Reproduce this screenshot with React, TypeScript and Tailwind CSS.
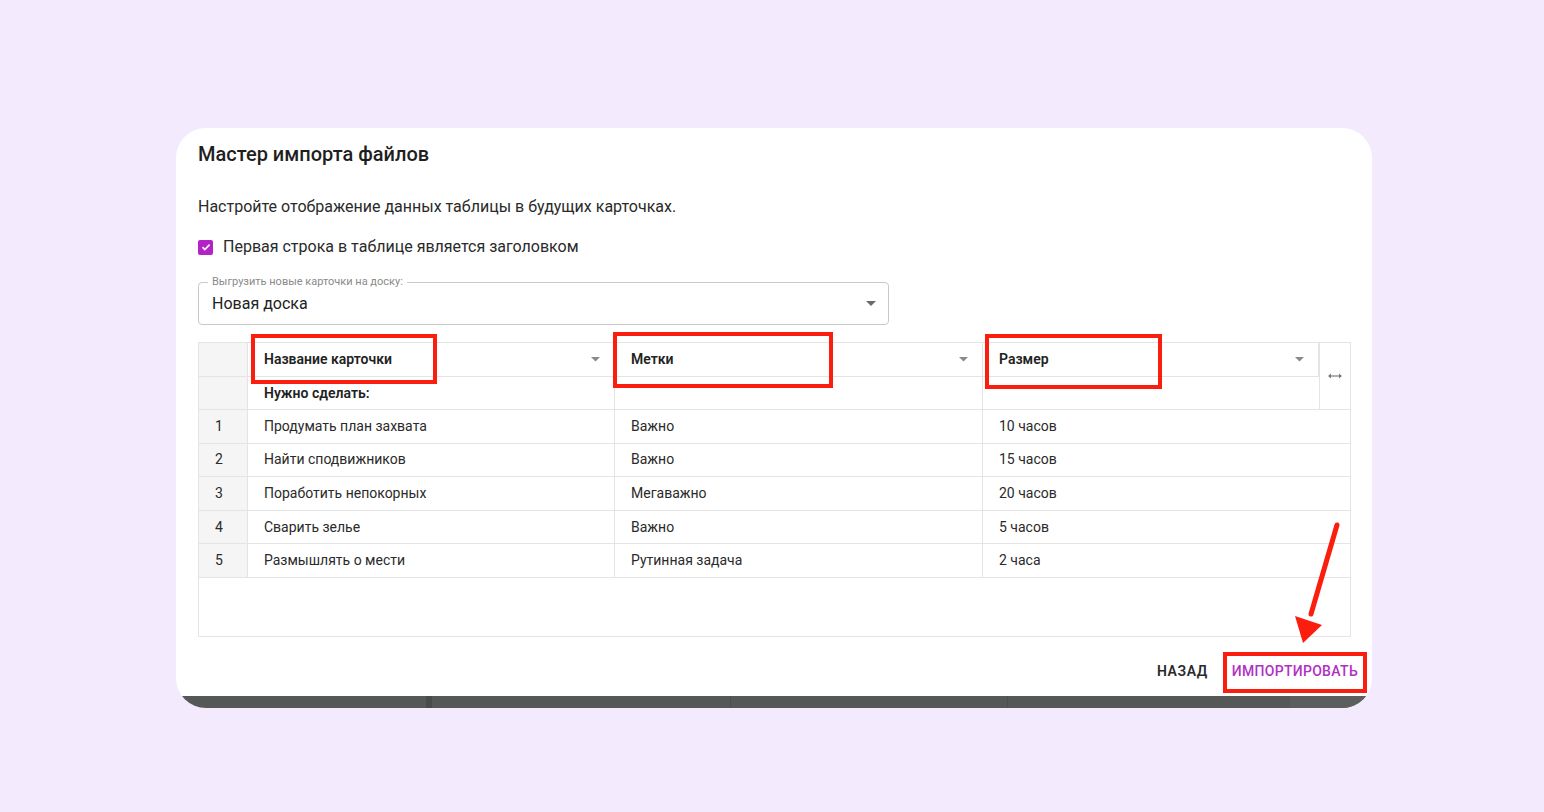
import React from "react";

const rows = [
  ["1", "Продумать план захвата", "Важно", "10 часов"],
  ["2", "Найти сподвижников", "Важно", "15 часов"],
  ["3", "Поработить непокорных", "Мегаважно", "20 часов"],
  ["4", "Сварить зелье", "Важно", "5 часов"],
  ["5", "Размышлять о мести", "Рутинная задача", "2 часа"],
];

function Caret({ big = false }: { big?: boolean }) {
  return big ? (
    <svg width="10" height="5" viewBox="0 0 10 5">
      <path d="M0 0h10L5 5z" fill="#6b6b6b" />
    </svg>
  ) : (
    <svg width="9" height="5" viewBox="0 0 9 5">
      <path d="M0 0h9L4.5 4.5z" fill="#8a8a8a" />
    </svg>
  );
}

function HeadCell({ title, last = false }: { title: string; last?: boolean }) {
  return (
    <div className={`flex items-center justify-between pl-4 pr-[14px] border-b border-[#e4e4e4] ${last ? "" : "border-r"}`}>
      <span className="text-[14px] font-semibold text-[#222]">{title}</span>
      <Caret />
    </div>
  );
}

export default function App() {
  return (
    <div
      className="relative w-[1544px] h-[812px] bg-[#f4eafd] pt-[128px] pl-[176px]"
      style={{ fontFamily: "Roboto, 'Noto Sans', sans-serif" }}
    >
      <div className="w-[1196px] h-[580px] rounded-[30px] bg-white overflow-hidden flex flex-col">
        <div className="flex-1 flex flex-col pl-[22px] pr-[21px] pt-[14px]">
          <h1 className="text-[20px] leading-6 font-medium text-[#1f1f1f]">Мастер импорта файлов</h1>
          <p className="mt-[29px] text-[16px] leading-6 text-[#2a2a2a]">
            Настройте отображение данных таблицы в будущих карточках.
          </p>
          <div className="mt-4 flex items-center h-6 gap-[10px]">
            <div className="w-[15px] h-[15px] rounded-[2px] bg-[#b322c6] flex items-center justify-center">
              <svg width="10" height="10" viewBox="0 0 10 10">
                <path d="M1.5 5.2l2.3 2.3L8.6 2.6" stroke="white" strokeWidth="1.7" fill="none" />
              </svg>
            </div>
            <span className="text-[16px] text-[#2a2a2a]">Первая строка в таблице является заголовком</span>
          </div>

          <div className="relative mt-[23px] w-[691px] h-[43px] rounded-[4px] border border-[#c9c9c9] flex items-center justify-between pl-[13px] pr-[12px]">
            <span className="absolute -top-[8px] left-[9px] bg-white px-[4px] text-[11px] leading-[14px] text-[#8a8a8a]">
              Выгрузить новые карточки на доску:
            </span>
            <span className="text-[16px] text-[#222] pt-[1px]">Новая доска</span>
            <Caret big />
          </div>

          <div className="mt-[17px] h-[295px] w-[1153px] border border-[#e4e4e4] bg-white">
            <div className="grid grid-cols-[49px_367px_368px_336px_31px] grid-rows-[34px_33px]">
              <div className="bg-[#f5f5f5] border-r border-b border-[#e4e4e4]" />
              <HeadCell title="Название карточки" />
              <HeadCell title="Метки" />
              <HeadCell title="Размер" />
              <div className="row-span-2 border-l border-b border-[#e4e4e4] flex items-center justify-center">
                <svg width="14" height="6" viewBox="0 0 14 6">
                  <path d="M1 3h12" stroke="#7a7a7a" strokeWidth="1.2" />
                  <path d="M0 3l3-2.6v5.2zM14 3l-3-2.6v5.2z" fill="#7a7a7a" />
                </svg>
              </div>
              <div className="bg-[#f5f5f5] border-r border-b border-[#e4e4e4]" />
              <div className="flex items-center pl-4 border-r border-b border-[#e4e4e4] text-[14px] font-semibold text-[#222]">
                Нужно сделать:
              </div>
              <div className="border-r border-b border-[#e4e4e4]" />
              <div className="border-b border-[#e4e4e4]" />
            </div>
            {rows.map((r) => (
              <div key={r[0]} className="grid grid-cols-[49px_367px_368px_1fr] h-[33.6px] border-b border-[#e4e4e4] text-[14px] text-[#2a2a2a]">
                <div className="bg-[#f5f5f5] border-r border-[#e4e4e4] flex items-center pl-4">{r[0]}</div>
                <div className="border-r border-[#e4e4e4] flex items-center pl-4">{r[1]}</div>
                <div className="border-r border-[#e4e4e4] flex items-center pl-4">{r[2]}</div>
                <div className="flex items-center pl-4">{r[3]}</div>
              </div>
            ))}
          </div>
        </div>

        <div className="flex justify-end items-center gap-[8px] pr-[6px] h-[36px] mb-[7px]">
          <button className="px-2 h-9 text-[14px] font-semibold tracking-[0.6px] text-[#2a2a2a]">НАЗАД</button>
          <button className="px-2 h-9 text-[14px] font-medium tracking-[0.3px] text-[#b130c4]">ИМПОРТИРОВАТЬ</button>
        </div>
        <div className="h-[12px] bg-[#565857] flex">
          <div className="w-[256px] border-r-[6px] border-[#4a4c4b]" />
          <div className="w-[299px] border-r border-[#4e504f]" />
          <div className="w-[277px] border-r border-[#4e504f]" />
          <div className="w-[282px]" />
          <div className="flex-1 bg-[#5c5e5d]" />
        </div>
      </div>

      {/* red annotations */}
      <div className="absolute left-[251px] top-[334px] w-[186px] h-[50px] border-4 border-[#fb1d0e]" />
      <div className="absolute left-[613px] top-[332px] w-[220px] h-[56px] border-4 border-[#fb1d0e]" />
      <div className="absolute left-[985px] top-[334px] w-[177px] h-[55px] border-4 border-[#fb1d0e]" />
      <div className="absolute left-[1223px] top-[652px] w-[144px] h-[41px] border-4 border-[#fb1d0e]" />
      <svg className="absolute left-0 top-0" width="1544" height="812" viewBox="0 0 1544 812">
        <path d="M1337 525L1311 614" stroke="#fb1d0e" strokeWidth="5" strokeLinecap="round" />
        <path d="M1303 643L1295 616L1322 625Z" fill="#fb1d0e" />
      </svg>
    </div>
  );
}
